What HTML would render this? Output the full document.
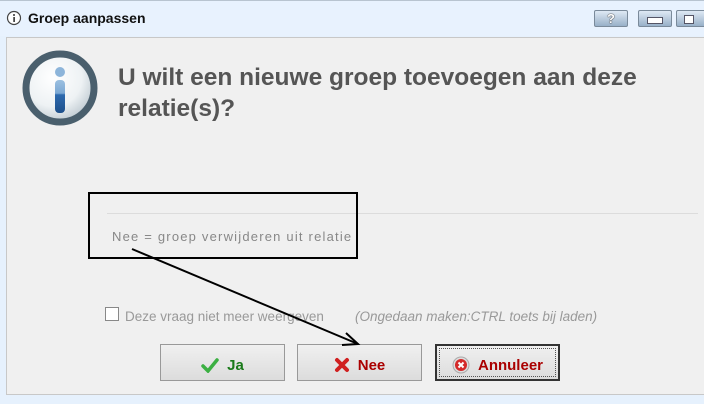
<!DOCTYPE html>
<html><head><style>
body{margin:0;width:704px;height:404px;background:#e6f1fd;position:relative;overflow:hidden;font-family:"Liberation Sans",sans-serif}
.abs{position:absolute}
.tb{left:0;top:0;width:704px;height:36px;background:#e8f2fe;border-top:1px solid #b8c4d0;box-sizing:border-box}
.panel{left:6px;top:37px;width:710px;height:358px;background:#f0f0f0;border:1px solid #c8c8c8;box-sizing:border-box}
.wb{top:10px;height:17px;border:1px solid #7a8a9a;border-radius:2px;background:linear-gradient(#dfe9f4,#98b0c8);box-sizing:border-box;font-size:13px;font-weight:bold;color:#fff;text-align:center;line-height:15px;text-shadow:0 0 1px #222,0 0 1px #222}
.btn{top:344px;width:125px;height:37px;border:1px solid #999;box-sizing:border-box;background:linear-gradient(#f0f0f0,#dcdcdc);font-size:15px;font-weight:bold;display:flex;align-items:center;justify-content:center;gap:8px;padding-top:5px}
</style></head><body>
<div class="abs tb"></div>
<svg class="abs" style="left:6px;top:10px" width="16" height="16"><circle cx="8" cy="8" r="6.5" fill="#fff" stroke="#444" stroke-width="1.2"/><rect x="7.3" y="7" width="1.6" height="5" fill="#333"/><circle cx="8" cy="5" r="1" fill="#333"/></svg>
<div class="abs" style="left:28px;top:10px;font-size:14px;font-weight:bold;color:#111">Groep aanpassen</div>
<div class="abs wb" style="left:594px;width:34px">?</div>
<div class="abs wb" style="left:638px;width:34px"><div style="width:14px;height:5px;margin:6px auto 0;background:#fff;border:1px solid #556"></div></div>
<div class="abs wb" style="left:676px;width:34px"><div style="width:8px;height:7px;margin:4px 0 0 7px;background:#fff;border:1px solid #556"></div></div>
<div class="abs panel"></div>
<svg class="abs" style="left:20px;top:48px" width="80" height="80">
<defs><radialGradient id="g" cx="0.4" cy="0.35" r="0.7"><stop offset="0" stop-color="#ffffff"/><stop offset="0.6" stop-color="#eef2f4"/><stop offset="1" stop-color="#b8c4cc"/></radialGradient>
<linearGradient id="b" x1="0" y1="0" x2="0" y2="1"><stop offset="0" stop-color="#9cc0e0"/><stop offset="0.4" stop-color="#7ba8d4"/><stop offset="0.45" stop-color="#2e6aae"/><stop offset="1" stop-color="#1d4f8a"/></linearGradient></defs>
<circle cx="40" cy="40" r="34" fill="url(#g)" stroke="#4a5f6d" stroke-width="7"/>
<circle cx="40" cy="24" r="5" fill="#8db5da"/>
<rect x="35" y="32" width="10" height="33" rx="4" fill="url(#b)"/>
</svg>
<div class="abs" style="left:118px;top:62px;font-size:24.5px;font-weight:bold;color:#555;line-height:31px;width:580px">U wilt een nieuwe groep toevoegen aan deze<br>relatie(s)?</div>
<div class="abs" style="left:107px;top:213px;width:591px;height:1px;background:#dcdcdc"></div>
<div class="abs" style="left:112px;top:229px;font-size:13px;color:#888;letter-spacing:1.2px">Nee = groep verwijderen uit relatie</div>
<div class="abs" style="left:88px;top:192px;width:270px;height:67px;border:2px solid #000;box-sizing:border-box"></div>
<div class="abs" style="left:105px;top:307px;width:14px;height:14px;border:1px solid #888;background:#fff;box-sizing:border-box"></div>
<div class="abs" style="left:125px;top:309px;font-size:13.5px;color:#999">Deze vraag niet meer weergeven</div>
<div class="abs" style="left:355px;top:309px;font-size:13.5px;color:#999;font-style:italic">(Ongedaan maken:CTRL toets bij laden)</div>
<div class="abs btn" style="left:160px;color:#1a7a1a"><svg width="18" height="16"><path d="M2 9 L7 14 L16 3" fill="none" stroke="#3cb043" stroke-width="3.5" stroke-linecap="round"/></svg>Ja</div>
<div class="abs btn" style="left:297px;color:#a00"><svg width="16" height="16"><path d="M3 3 L13 13 M13 3 L3 13" stroke="#d02020" stroke-width="4" stroke-linecap="round"/></svg>Nee</div>
<div class="abs btn" style="left:435px;color:#a00;border:2px solid #333;outline:1px dotted #555;outline-offset:-5px"><svg width="18" height="18"><circle cx="9" cy="9" r="8" fill="#ddd" stroke="#aaa"/><circle cx="9" cy="9" r="6" fill="#d42a2a"/><path d="M6.5 6.5 L11.5 11.5 M11.5 6.5 L6.5 11.5" stroke="#fff" stroke-width="2"/></svg>Annuleer</div>
<svg class="abs" style="left:0;top:0" width="704" height="404"><line x1="132" y1="249" x2="358" y2="344" stroke="#000" stroke-width="2"/><path d="M346 333 L358 344 L342 345" fill="none" stroke="#000" stroke-width="2"/></svg>
</body></html>
